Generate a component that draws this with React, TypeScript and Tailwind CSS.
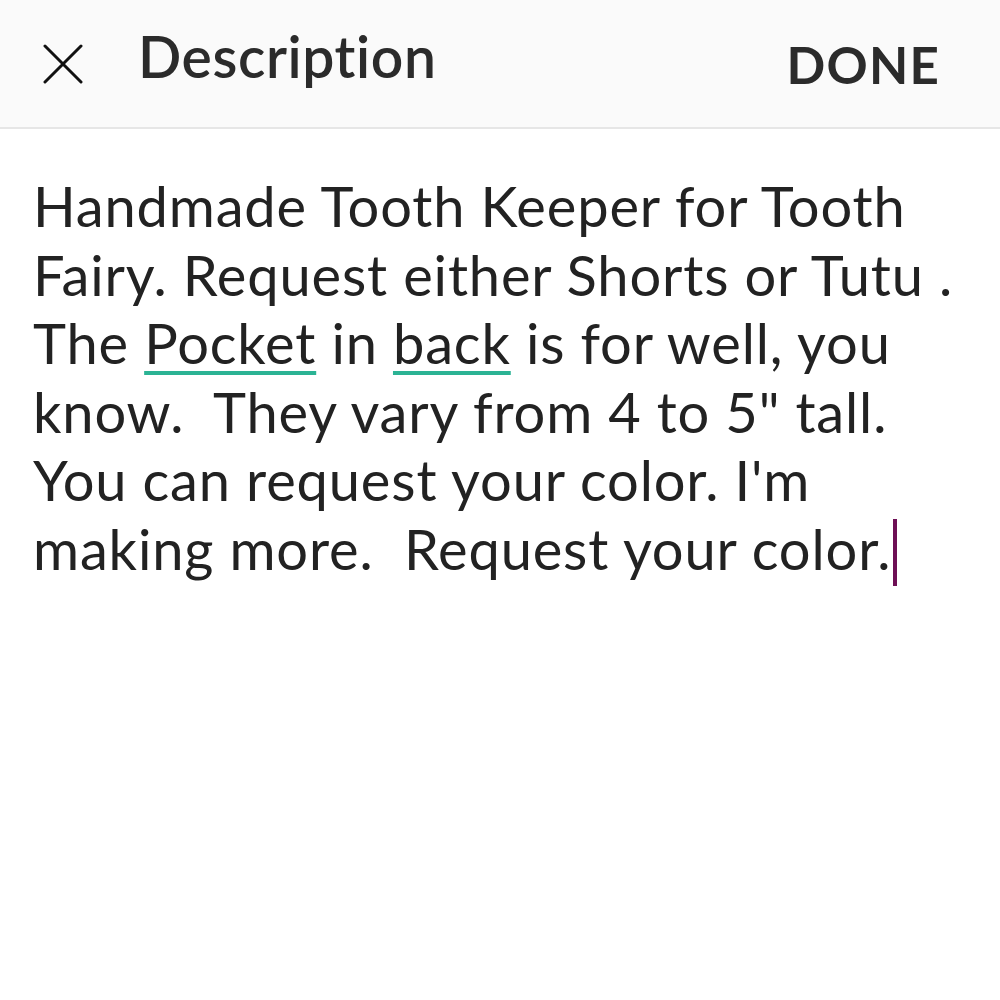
import React from 'react';

const lines = [
  { parts: [{ t: 'Handmade Tooth Keeper for Tooth' }] },
  { parts: [{ t: 'Fairy. Request either Shorts or Tutu .' }] },
  {
    parts: [
      { t: 'The ' },
      { t: 'Pocket', u: true },
      { t: ' in ' },
      { t: 'back', u: true },
      { t: ' is for well, you' },
    ],
  },
  { parts: [{ t: 'know.  They vary from 4 to 5" tall.' }] },
  { parts: [{ t: "You can request your color. I'm" }] },
  { parts: [{ t: 'making more.  Request your color.' }], cursor: true },
];

function CloseIcon() {
  return (
    <svg width="40" height="40" viewBox="0 0 40 40" fill="none">
      <path d="M2 2L38 38M38 2L2 38" stroke="#111" strokeWidth="3" strokeLinecap="round" />
    </svg>
  );
}

export default function App() {
  return (
    <div className="w-[1000px] h-[1000px] bg-white font-['Lato',sans-serif] text-[#222] overflow-hidden">
      <div className="h-[129px] bg-[#fafafa] border-b-2 border-[#e6e6e6] flex items-center pl-[43px] pr-[60px]">
        <CloseIcon />
        <div className="ml-[55px] -mt-[14px] text-[57px] font-semibold text-[#2b2b2b] tracking-[0.6px]">Description</div>
        <div className="ml-auto mt-[4px] text-[51px] font-bold text-[#2b2b2b] tracking-[1.2px]">DONE</div>
      </div>
      <div className="pl-[33px] pt-[43px] text-[56px] leading-[68.6px] whitespace-pre tracking-[0.85px]">
        {lines.map((line, i) => (
          <div key={i} className="h-[68.6px] flex items-baseline">
            <span>
              {line.parts.map((p, j) =>
                p.u ? (
                  <span key={j} className="underline decoration-[#2bb394] decoration-[4px] underline-offset-[7px]">
                    {p.t}
                  </span>
                ) : (
                  <span key={j}>{p.t}</span>
                )
              )}
            </span>
            {line.cursor && <span className="inline-block w-[4px] h-[67px] bg-[#6e0f55] self-center mt-[6px] ml-[2px]" />}
          </div>
        ))}
      </div>
    </div>
  );
}
